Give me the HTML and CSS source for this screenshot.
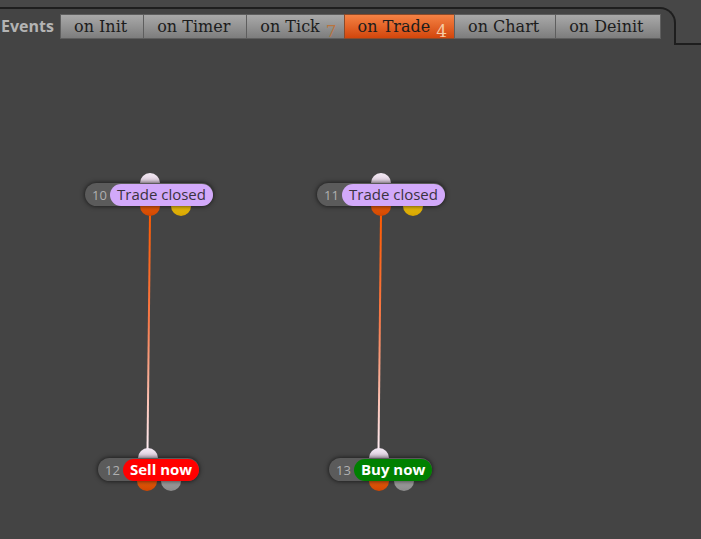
FILE: index.html
```html
<!DOCTYPE html>
<html lang="en">
<head>
  <meta charset="UTF-8" />
  <title>Events</title>
  <link rel="stylesheet" href="styles.css">
</head>
<body>
  <div class="topbar">
    <div class="tabstrip">
      <span class="events">Events</span>
      <div class="tabs">
        <button class="tab">on Init</button>
        <button class="tab">on Timer</button>
        <button class="tab">on Tick<sub>7</sub></button>
        <button class="tab active">on Trade<sub>4</sub></button>
        <button class="tab">on Chart</button>
        <button class="tab">on Deinit</button>
      </div>
    </div>
    <div class="filler"></div>
  </div>

  <div class="board">
    <svg class="wires" width="701" height="494">
      <defs>
        <linearGradient id="wire" gradientUnits="userSpaceOnUse" x1="0" y1="170" x2="0" y2="405">
          <stop offset="0" stop-color="#ff5a00"/>
          <stop offset="0.45" stop-color="#f87a4a"/>
          <stop offset="1" stop-color="#ffeef4"/>
        </linearGradient>
      </defs>
      <line x1="150" y1="168" x2="147.5" y2="406" stroke="url(#wire)" stroke-width="2"/>
      <line x1="381" y1="168" x2="378.5" y2="406" stroke="url(#wire)" stroke-width="2"/>
    </svg>

    <div class="block" style="left:85px;top:138px">
      <span class="port in" style="left:55px"></span>
      <span class="port out orange" style="left:55px"></span>
      <span class="port out yellow" style="left:86px"></span>
      <div class="node"><span class="num">10</span><span class="label purple">Trade closed</span></div>
    </div>

    <div class="block" style="left:317px;top:138px">
      <span class="port in" style="left:54px"></span>
      <span class="port out orange" style="left:54px"></span>
      <span class="port out yellow" style="left:86px"></span>
      <div class="node"><span class="num">11</span><span class="label purple">Trade closed</span></div>
    </div>

    <div class="block" style="left:98px;top:413px">
      <span class="port in" style="left:40px"></span>
      <span class="port out orange" style="left:39px"></span>
      <span class="port out grey" style="left:63px"></span>
      <div class="node"><span class="num">12</span><span class="label red">Sell now</span></div>
    </div>

    <div class="block" style="left:329px;top:413px">
      <span class="port in" style="left:40px"></span>
      <span class="port out orange" style="left:40px"></span>
      <span class="port out grey" style="left:65px"></span>
      <div class="node"><span class="num">13</span><span class="label green">Buy now</span></div>
    </div>
  </div>
</body>
</html>
```

FILE: styles.css
```css
* { margin: 0; padding: 0; box-sizing: border-box; }
body {
  background-color: #444;
  font-family: "Open Sans", "DejaVu Sans", sans-serif;
  width: 701px;
  height: 539px;
  overflow: hidden;
}
.topbar {
  display: flex;
  height: 45px;
  background-color: #474747;
}
.tabstrip {
  width: 676px;
  margin-top: 7px;
  padding-top: 5px;
  border-top: 2px solid #1e1e1e;
  border-right: 2px solid #1e1e1e;
  border-top-right-radius: 16px;
  display: flex;
  align-items: flex-start;
  background-color: #444;
}
.filler {
  flex: 1;
  border-bottom: 2px solid #1e1e1e;
}
.events {
  height: 25px;
  line-height: 25px;
  padding-left: 1px;
  width: 60px;
  color: #b4b4b4;
  font-weight: 700;
  font-size: 16px;
}
.tabs { display: flex; }
.tab {
  height: 25px;
  padding: 0 16px 0 13px;
  margin-left: -1px;
  border: 1px solid #5e5e5e;
  background: linear-gradient(#a9a9a9, #7d7d7d);
  font-family: "DejaVu Serif", serif;
  font-size: 16px;
  color: #1c1c1c;
  line-height: 24px;
  white-space: nowrap;
}
.tabs .tab:first-child { margin-left: 0; }
.tab sub {
  font-size: 17px;
  line-height: 0;
  vertical-align: -5px;
  margin-left: 6px;
  margin-right: -9px;
  color: #b8743f;
}
.tab.active {
  background: linear-gradient(#f58244, #d2460c);
  border-color: #8a4a2a;
}
.tab.active sub { color: #f5cba4; }

.board {
  position: relative;
  height: 494px;
}
.wires {
  position: absolute;
  left: 0;
  top: 0;
}
.block {
  position: absolute;
}
.port {
  position: absolute;
  width: 20px;
  height: 20px;
  border-radius: 50%;
}
.port.in {
  top: -10px;
  background: linear-gradient(#f4eaf4, #c9b2ca);
}
.port.out { top: 13px; }
.orange { background: linear-gradient(#ff7018, #d04600); }
.yellow { background: linear-gradient(#ffd820, #d6a400); }
.grey { background: linear-gradient(#b8b8b8, #8a8a8a); }

.node {
  position: relative;
  display: flex;
  align-items: center;
  height: 23px;
  padding-left: 7px;
  border-radius: 12px;
  background-color: #5b5b5b;
  box-shadow: 0 0 5px rgba(0, 0, 0, 0.75);
  white-space: nowrap;
}
.num {
  width: 18px;
  color: #b0b0b0;
  font-size: 13px;
  line-height: 20px;
}
.label {
  height: 22px;
  line-height: 20px;
  padding: 0 7px;
  border-radius: 11px;
  font-size: 15px;
}
.label.purple { background-color: #d2a9fa; color: #3a3340; }
.label.red { background-color: #ff0000; color: #fff; font-weight: 700; }
.label.green { background-color: #008000; color: #fff; font-weight: 700; }
```
